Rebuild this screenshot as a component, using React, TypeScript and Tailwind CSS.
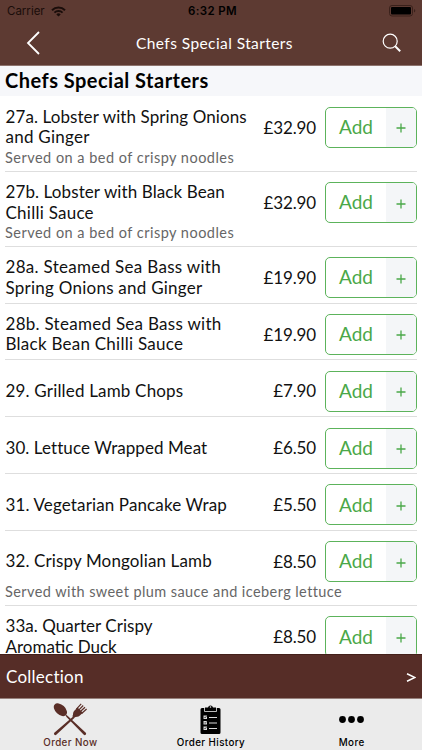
import type { ReactNode } from "react";

type MenuItem = {
  lines: { text: string; tracking: string }[];
  price: string;
  note?: { text: string; tracking: string };
};

const noodles = { text: "Served on a bed of crispy noodles", tracking: "tracking-[0.48px]" };

const items: MenuItem[] = [
  {
    lines: [
      { text: "27a. Lobster with Spring Onions", tracking: "tracking-[0.09px]" },
      { text: "and Ginger", tracking: "tracking-[0.25px]" },
    ],
    price: "£32.90",
    note: noodles,
  },
  {
    lines: [
      { text: "27b. Lobster with Black Bean", tracking: "tracking-[0.1px]" },
      { text: "Chilli Sauce", tracking: "tracking-[0.25px]" },
    ],
    price: "£32.90",
    note: noodles,
  },
  {
    lines: [
      { text: "28a. Steamed Sea Bass with", tracking: "tracking-[0.3px]" },
      { text: "Spring Onions and Ginger", tracking: "tracking-[0.25px]" },
    ],
    price: "£19.90",
  },
  {
    lines: [
      { text: "28b. Steamed Sea Bass with", tracking: "tracking-[0.28px]" },
      { text: "Black Bean Chilli Sauce", tracking: "tracking-[0.25px]" },
    ],
    price: "£19.90",
  },
  { lines: [{ text: "29. Grilled Lamb Chops", tracking: "tracking-[0.18px]" }], price: "£7.90" },
  { lines: [{ text: "30. Lettuce Wrapped Meat", tracking: "tracking-[0.07px]" }], price: "£6.50" },
  { lines: [{ text: "31. Vegetarian Pancake Wrap", tracking: "tracking-[0.13px]" }], price: "£5.50" },
  {
    lines: [{ text: "32. Crispy Mongolian Lamb", tracking: "tracking-[0.13px]" }],
    price: "£8.50",
    note: { text: "Served with sweet plum sauce and iceberg lettuce", tracking: "tracking-[0.42px]" },
  },
  {
    lines: [
      { text: "33a. Quarter Crispy", tracking: "tracking-[0.04px]" },
      { text: "Aromatic Duck", tracking: "tracking-[0px]" },
    ],
    price: "£8.50",
  },
];

function StatusBar() {
  return (
    <div className="grid h-[22px] grid-cols-3 items-center px-[7px] font-['Inter'] text-black">
      <div className="flex items-center gap-[6px] pt-[1px] text-[11.5px] text-[#1a0d0a]">
        <span>Carrier</span>
        <svg width="15" height="11" viewBox="0 0 15 11" fill="none" stroke="currentColor">
          <path d="M1 4.2a9.3 9.3 0 0 1 13 0" strokeWidth="2" />
          <path d="M3.4 6.7a5.8 5.8 0 0 1 8.2 0" strokeWidth="1.8" />
          <path d="M7.5 10.6 5.3 8.4a3.1 3.1 0 0 1 4.4 0z" fill="currentColor" stroke="none" />
        </svg>
      </div>
      <span className="pt-[1px] pl-[3px] text-center text-[11.5px] font-semibold tracking-[0.4px]">6:32 PM</span>
      <svg className="-mr-[1px] justify-self-end" width="27" height="12" viewBox="0 0 27 12">
        <rect x="0.5" y="0.5" width="23" height="10.5" rx="2.5" fill="none" stroke="#3a211b" />
        <rect x="2" y="2" width="20" height="7.5" rx="1" />
        <path d="M25 4v3.5q1.3-.5 1.3-1.75T25 4z" fill="#3a211b" />
      </svg>
    </div>
  );
}

function NavBar() {
  return (
    <div className="grid h-[42px] grid-cols-[64px_1fr_57px] items-center text-white">
      <svg className="ml-[26px]" width="15" height="24" viewBox="0 0 15 24" fill="none" stroke="currentColor" strokeWidth="1.8">
        <path d="M13 1 2 12l11 11" />
      </svg>
      <h1 className="text-center text-[15.5px] leading-5 tracking-[0.42px]">Chefs Special Starters</h1>
      <svg className="ml-[17px]" width="20" height="20" viewBox="0 0 20 20" fill="none" stroke="currentColor">
        <circle cx="8.2" cy="8.2" r="7" strokeWidth="1.2" />
        <path d="M13.2 13.2l5 5" strokeWidth="2" />
      </svg>
    </div>
  );
}

function AddButton() {
  return (
    <button className="flex h-[41px] w-[92px] shrink-0 overflow-hidden rounded-[5px] border border-[#5cb35b] bg-white text-[#4aa848]">
      <span className="flex flex-1 items-center justify-center text-[19px]">Add</span>
      <span className="flex w-[30px] items-center justify-center bg-[#f4f6f8] pt-[2px]">
        <svg width="10" height="10" viewBox="0 0 10 10" stroke="currentColor" strokeWidth="1.3">
          <path d="M5 .5v9M.5 5h9" />
        </svg>
      </span>
    </button>
  );
}

function MenuRow({ item }: { item: MenuItem }) {
  return (
    <li className="mr-[5px] ml-[5px] border-b border-[#dedede] pt-[10.7px] pb-[4.6px]">
      <div className="flex h-[40.5px] items-center">
        <div className="flex-1 pl-[0.5px] text-[17px] leading-[20.5px] whitespace-nowrap">
          {item.lines.map((line) => (
            <div key={line.text} className={line.tracking}>
              {line.text}
            </div>
          ))}
        </div>
        <span className="mr-[9px] text-[17px] -tracking-[0.15px]">{item.price}</span>
        <AddButton />
      </div>
      {item.note && (
        <p className={`mb-[0.4px] h-[18px] text-[14.5px] leading-[19px] whitespace-nowrap text-[#666] ${item.note.tracking}`}>
          {item.note.text}
        </p>
      )}
    </li>
  );
}

function CutleryIcon() {
  return (
    <svg width="34" height="33" viewBox="0 0 34 33" fill="currentColor">
      <ellipse cx="7.4" cy="6.7" rx="7.8" ry="4.9" transform="rotate(43 7.4 6.7)" />
      <path d="M12 11l2.5 1.8L32.8 29.8q.8 1-.1 1.9t-1.9.1L13.5 14z" />
      <path d="M20.2 13.4l1.4 1.3L3.3 31.8q-1 .8-1.9-.1t-.1-1.9z" />
      <path d="M19.3 13.2q.9-1.2.8-3 .1-1.3 1.2-2.4l3.2-3.3 5.400 5.200-3.300 3.100q-1 1-2.400 1-1.800 0-3 1z" />
      <path
        d="M23.400 6.200 28.200.8M25.200 7.600l5-5.100M26.900 9l5.100-4.800M28.600 10.500l5-4.500"
        fill="none"
        stroke="currentColor"
        strokeWidth="1.2"
      />
    </svg>
  );
}

function ClipboardIcon() {
  return (
    <svg width="21" height="30" viewBox="0 0 21 30">
      <path d="M2 4h3V3.5h3a2.6 2.6 0 0 1 5 0h3V4h3q1.500 0 1.500 1.500v23q0 1.500-1.500 1.500H2Q.5 30 .5 28.500v-23Q.5 4 2 4z" />
      <path d="M4.5 4v3.5h12V4" fill="none" stroke="#ebebeb" strokeWidth=".8" />
      <circle cx="10.5" cy="3" r=".8" fill="#ebebeb" />
      <g fill="#d8d8d8">
        <path d="M3.5 11.5h3.5v3.5H3.5zM3.5 17h3.5v3.5H3.5zM3.5 22.5h3.5v3.5H3.5z" />
        <path d="M9 13h8v1H9zM9 18.5h8v1H9zM9 24h8v1H9z" />
      </g>
      <path d="M4.3 13l.8.9 1.4-1.8M4.3 18.5l.8.9 1.4-1.8M4.3 24l.8.9 1.4-1.8" fill="none" stroke="#000" strokeWidth=".6" />
    </svg>
  );
}

function MoreIcon() {
  return (
    <svg width="25" height="7" viewBox="0 0 25 7">
      <circle cx="3.5" cy="3.5" r="3.4" />
      <circle cx="12.5" cy="3.5" r="3.4" />
      <circle cx="21.5" cy="3.5" r="3.4" />
    </svg>
  );
}

function Tab({ label, active, children }: { label: string; active?: boolean; children: ReactNode }) {
  return (
    <div className={`flex flex-col items-center ${active ? "text-[#5a2e27]" : "text-black"}`}>
      <div className="flex h-[37px] items-center pt-[3px]">{children}</div>
      <span className="font-['Inter'] text-[9.8px] leading-[14px] font-medium tracking-[0.4px]">{label}</span>
    </div>
  );
}

export default function App() {
  return (
    <div className="flex h-[750px] w-[422px] flex-col overflow-hidden bg-white font-['Lato',sans-serif] text-[#111]">
      <header className="h-[66px] shrink-0 border-b border-[#8d736d] bg-[#5d3a32]">
        <StatusBar />
        <NavBar />
      </header>
      <main className="min-h-0 flex-1 overflow-hidden">
        <h2 className="h-[30px] bg-[#f6f7fa] pl-[5px] text-[20px] leading-[28px] font-bold tracking-[0.48px] text-black">
          Chefs Special Starters
        </h2>
        <ul className="pt-[0.4px]">
          {items.map((item) => (
            <MenuRow key={item.lines[0].text} item={item} />
          ))}
        </ul>
      </main>
      <div className="flex h-[45px] shrink-0 items-center justify-between border-t border-b border-t-[#43201a] border-b-[#96807b] bg-[#562d27] px-[6px] text-[17px] tracking-[0.25px] text-white">
        <span>Collection</span>
        <svg className="mt-[2px]" width="10" height="9" viewBox="0 0 10 9" fill="none" stroke="currentColor" strokeWidth="1.5">
          <path d="M1 .8l8 3.7-8 3.7" />
        </svg>
      </div>
      <nav className="grid h-[51px] shrink-0 grid-cols-3 bg-[#ebebeb]">
        <Tab label="Order Now" active>
          <CutleryIcon />
        </Tab>
        <Tab label="Order History">
          <ClipboardIcon />
        </Tab>
        <Tab label="More">
          <MoreIcon />
        </Tab>
      </nav>
    </div>
  );
}
